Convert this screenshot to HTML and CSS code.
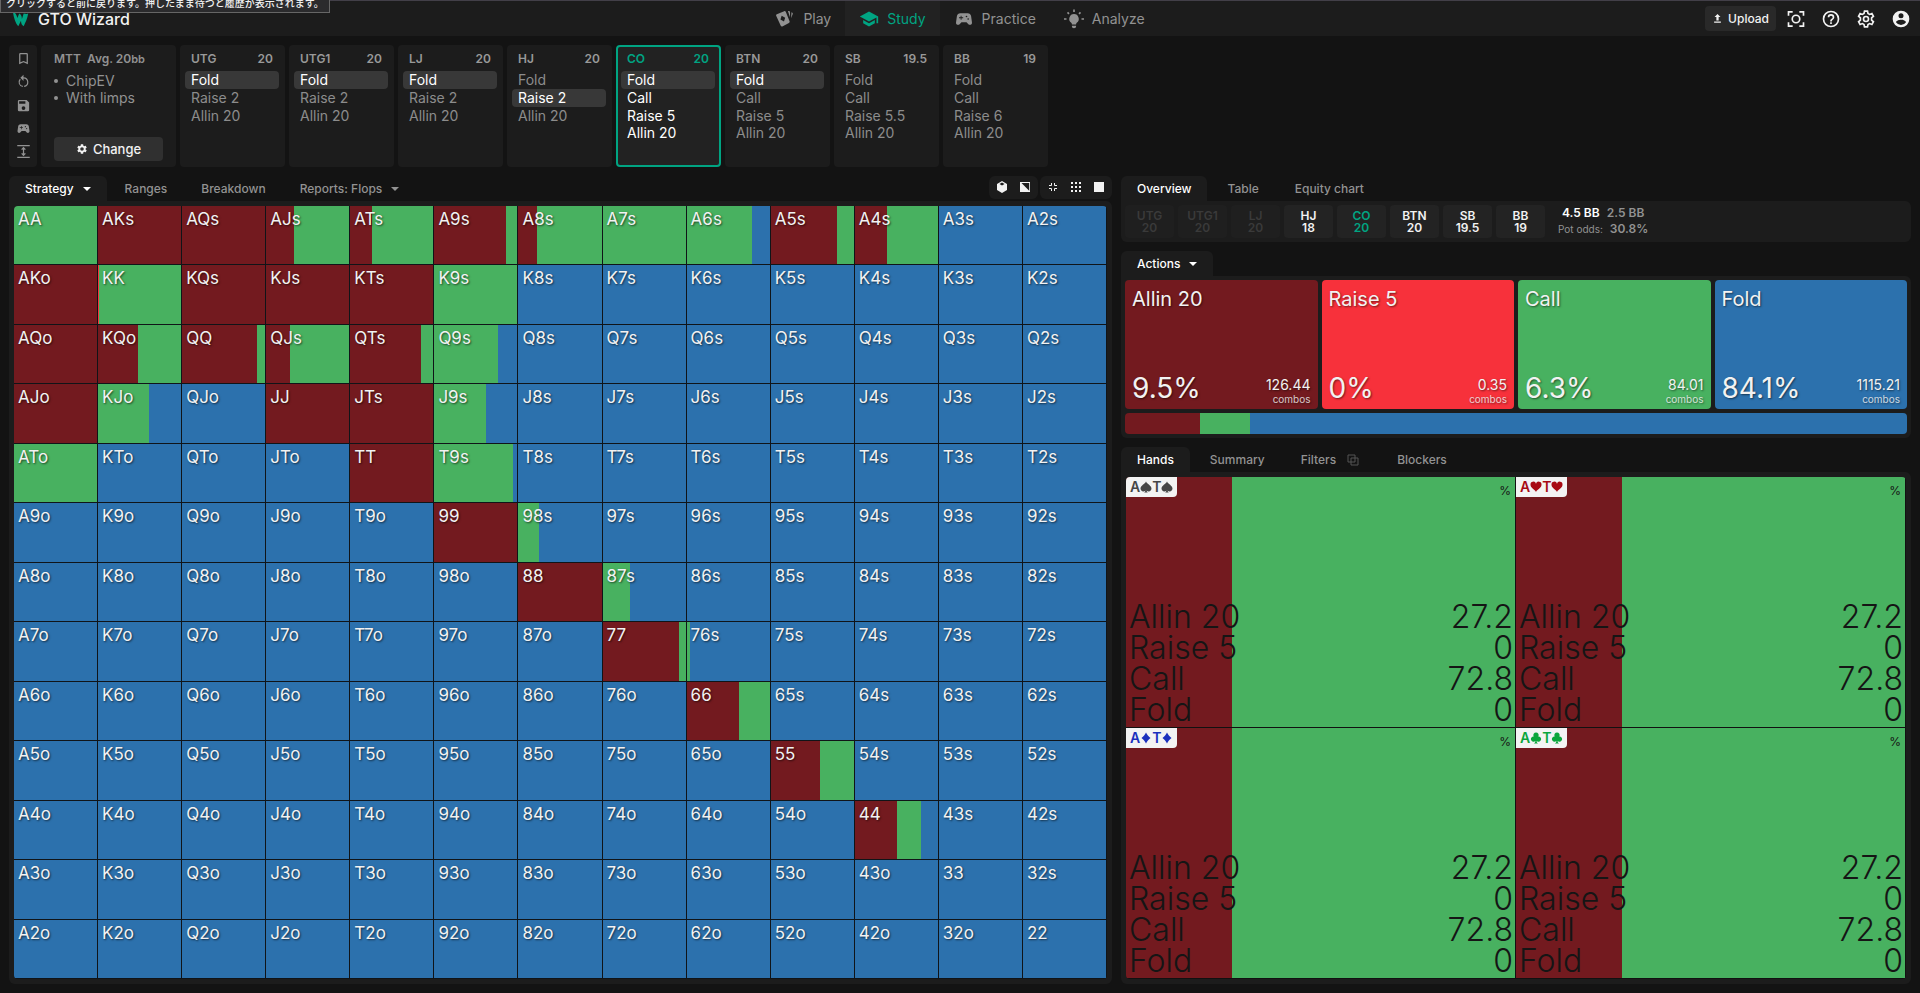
FILE: index.html
```html
<!DOCTYPE html>
<html lang="en">
<head>
<meta charset="utf-8">
<title>GTO Wizard</title>
<link rel="stylesheet" href="styles.css">
</head>
<body>
<svg class="sprite" aria-hidden="true">
  <symbol id="i-pad" viewBox="0 0 24 24"><path d="M21.58 16.09l-1.09-7.66C20.21 6.46 18.52 5 16.53 5H7.47C5.48 5 3.79 6.46 3.51 8.43l-1.09 7.66C2.2 17.63 3.39 19 4.94 19c.68 0 1.32-.27 1.8-.75L9 16h6l2.25 2.25c.48.48 1.13.75 1.8.75 1.56 0 2.75-1.37 2.53-2.91zM11 11H9v2H8v-2H6v-1h2V8h1v2h2v1zm4-1a1 1 0 1 1 0-2 1 1 0 0 1 0 2zm2 3a1 1 0 1 1 0-2 1 1 0 0 1 0 2z"/></symbol>
  <symbol id="i-gear" viewBox="0 0 24 24"><path d="M19.14 12.94c.04-.3.06-.61.06-.94 0-.32-.02-.64-.07-.94l2.03-1.58c.18-.14.23-.41.12-.61l-1.92-3.32c-.12-.22-.37-.29-.59-.22l-2.39.96c-.5-.38-1.03-.7-1.62-.94l-.36-2.54c-.04-.24-.24-.41-.48-.41h-3.84c-.24 0-.43.17-.47.41l-.36 2.54c-.59.24-1.13.57-1.62.94l-2.39-.96c-.22-.08-.47 0-.59.22L2.74 8.87c-.12.21-.08.47.12.61l2.03 1.58c-.05.3-.09.63-.09.94s.02.64.07.94l-2.03 1.58c-.18.14-.23.41-.12.61l1.92 3.32c.12.22.37.29.59.22l2.39-.96c.5.38 1.03.7 1.62.94l.36 2.54c.05.24.24.41.48.41h3.84c.24 0 .44-.17.47-.41l.36-2.54c.59-.24 1.13-.56 1.62-.94l2.39.96c.22.08.47 0 .59-.22l1.92-3.32c.12-.22.07-.47-.12-.61l-2.01-1.58zM12 15.6A3.6 3.6 0 1 1 12 8.4a3.6 3.6 0 0 1 0 7.2z"/></symbol>
  <symbol id="i-spade" viewBox="0 0 24 24"><path d="M12 1C10 6 1 9 1 15.500a5.500 5.500 0 0 0 9.700 3.300C10.500 20.800 9.500 22 8 23h8c-1.500-1-2.500-2.200-2.700-4.200A5.500 5.500 0 0 0 23 15.500C23 9 14 6 12 1z"/></symbol>
  <symbol id="i-heart" viewBox="0 0 24 24"><path d="M12 22C10 17 1 14 1 7.500A5.600 5.600 0 0 1 12 5.500a5.600 5.600 0 0 1 11 2C23 14 14 17 12 22z"/></symbol>
  <symbol id="i-diamond" viewBox="0 0 24 24"><path d="M12 1c2 4 5 8 9 11-4 3-7 7-9 11-2-4-5-8-9-11 4-3 7-7 9-11z"/></symbol>
  <symbol id="i-club" viewBox="0 0 24 24"><path d="M12 1a5.200 5.200 0 0 0-4.500 7.900A5.300 5.300 0 1 0 10.800 18c-.1 2.400-1.100 4-2.800 5h8c-1.700-1-2.700-2.600-2.800-5a5.300 5.300 0 1 0 3.300-9.100A5.200 5.200 0 0 0 12 1z"/></symbol>
</svg>

<div class="hint" role="tooltip">クリックすると前に戻ります。押したまま待つと履歴が表示されます。</div>

<header class="topbar">
  <a class="brand" href="#">
    <svg class="brand-mark" viewBox="0 0 20 16"><path d="M1 0c3 1 4 3 5 7l2-5c2 1 3 3 3 6l2-6c2 0 3 1 5 0-1 6-3 10-5 14-2-1-3-3-3-6l-3 6C4 13 2 7 1 0z"/></svg>
    <span>GTO Wizard</span>
  </a>
  <nav class="nav">
    <a class="nav-item" href="#">
      <svg class="i20" viewBox="0 0 24 24"><path fill-rule="evenodd" d="M2.200 6.200 11 2.600c.8-.3 1.500 0 1.900.8l4.600 11.400c.3.800 0 1.500-.8 1.900L8.800 21c-.8.300-1.500 0-1.900-.8L1.400 8.200c-.3-.9 0-1.600.8-2zM8 8l-1.500 4.500L10.800 15l1.400-4.600z"/><path d="M15.500 2.500h1c.8 0 1.500.6 1.500 1.400v6zM19.800 3.800c1 .3 1.900 1 1.500 2.200l-2 5z"/></svg>
      <span>Play</span></a>
    <a class="nav-item active" href="#">
      <svg class="i20" viewBox="0 0 24 24"><path d="M5 13.180v4L12 21l7-3.820v-4L12 17zM12 3 1 9l11 6 9-4.910V17h2V9z"/></svg>
      <span>Study</span></a>
    <a class="nav-item" href="#"><svg class="i20"><use href="#i-pad"/></svg><span>Practice</span></a>
    <a class="nav-item" href="#">
      <svg class="i20" viewBox="0 0 24 24"><path d="M12 6a5.800 5.800 0 0 0-3.300 10.500c.6.500.8 1.200.8 2h5c0-.8.200-1.500.8-2A5.800 5.800 0 0 0 12 6zM9.500 20h5v1c0 1-.9 2-2.500 2s-2.500-1-2.500-2z"/><path class="line" d="M12 .5V3.500M4.200 4 6 5.800M19.800 4 18 5.800M0 12h3M21 12h3"/></svg>
      <span>Analyze</span></a>
  </nav>
  <div class="tools">
    <button class="upload"><svg viewBox="0 0 12 12"><path d="M6 0l4 4H7.500v4.500h-3V4H2zM1.500 10h9v1.500h-9z"/></svg>Upload</button>
    <button class="tool" aria-label="Capture"><svg class="i20" viewBox="0 0 24 24"><path class="line" d="M3 8V3.500h5M16 3.500h5V8M21 16v4.500h-5M8 20.500H3V16"/><circle class="line" cx="12" cy="12" r="4.500"/></svg></button>
    <button class="tool" aria-label="Help"><svg class="i20" viewBox="0 0 24 24"><path d="M11 18h2v-2h-2v2zm1-16a10 10 0 1 0 0 20 10 10 0 0 0 0-20zm0 18a8 8 0 1 1 0-16 8 8 0 0 1 0 16zm0-14a4 4 0 0 0-4 4h2a2 2 0 1 1 4 0c0 2-3 1.750-3 5h2c0-2.250 3-2.500 3-5a4 4 0 0 0-4-4z"/></svg></button>
    <button class="tool" aria-label="Settings"><svg class="i20" viewBox="0 0 24 24"><path class="line" d="M10.200 2.500h3.600l.6 2.900 1.900 1.100 2.800-1 1.800 3.200-2.200 1.900v2.800l2.200 1.900-1.800 3.200-2.800-1-1.900 1.100-.6 2.900h-3.600l-.6-2.900-1.900-1.100-2.800 1-1.800-3.200 2.200-1.900v-2.800L3.100 8.700l1.800-3.200 2.800 1 1.900-1.100z"/><circle class="line" cx="12" cy="12" r="3"/></svg></button>
    <button class="tool" aria-label="Account"><svg class="i20" viewBox="0 0 24 24"><path d="M12 2a10 10 0 1 0 0 20 10 10 0 0 0 0-20zm0 3a3 3 0 1 1 0 6 3 3 0 0 1 0-6zm0 14.200a7.200 7.200 0 0 1-6-3.220c.03-1.990 4-3.080 6-3.080 1.990 0 5.970 1.090 6 3.080a7.200 7.200 0 0 1-6 3.220z"/></svg></button>
  </div>
</header>

<section class="spots">
  <div class="side">
    <button aria-label="Bookmark"><svg viewBox="0 0 24 24"><path d="M17 18l-5-2.180L7 18V5h10m0-2H7a2 2 0 0 0-2 2v16l7-3 7 3V5a2 2 0 0 0-2-2z"/></svg></button>
    <button aria-label="Reset"><svg viewBox="0 0 24 24"><path d="M12 5V1L7 6l5 5V7a6 6 0 0 1 1 11.900v2A8 8 0 0 0 12 5zM6 13a6 6 0 0 1 1.500-4L6.100 7.600A8 8 0 0 0 11 20.900v-2A6 6 0 0 1 6 13z"/></svg></button>
    <button aria-label="Save"><svg viewBox="0 0 24 24"><path d="M15 9H5V5h10m-3 14a3 3 0 1 1 0-6 3 3 0 0 1 0 6m5-16H5a2 2 0 0 0-2 2v14a2 2 0 0 0 2 2h14a2 2 0 0 0 2-2V7z"/></svg></button>
    <button aria-label="Practice"><svg><use href="#i-pad"/></svg></button>
    <button aria-label="Row height"><svg viewBox="0 0 24 24"><path class="line" d="M2 2.500h20M2 21.500h20M12 6v12M9 9l3-3 3 3M9 15l3 3 3-3"/></svg></button>
  </div>
  <div class="game">
    <h2>MTT&nbsp; Avg. 20<small>bb</small></h2>
    <ul><li>ChipEV</li><li>With limps</li></ul>
    <button class="change"><svg><use href="#i-gear"/></svg>Change</button>
  </div>
  <div class="spot"><h3>UTG<span>20</span></h3><button class="on">Fold</button><button>Raise 2</button><button>Allin 20</button></div>
  <div class="spot"><h3>UTG1<span>20</span></h3><button class="on">Fold</button><button>Raise 2</button><button>Allin 20</button></div>
  <div class="spot"><h3>LJ<span>20</span></h3><button class="on">Fold</button><button>Raise 2</button><button>Allin 20</button></div>
  <div class="spot"><h3>HJ<span>20</span></h3><button>Fold</button><button class="on">Raise 2</button><button>Allin 20</button></div>
  <div class="spot current"><h3>CO<span>20</span></h3><button class="on">Fold</button><button>Call</button><button>Raise 5</button><button>Allin 20</button></div>
  <div class="spot"><h3>BTN<span>20</span></h3><button class="on">Fold</button><button>Call</button><button>Raise 5</button><button>Allin 20</button></div>
  <div class="spot"><h3>SB<span>19.5</span></h3><button>Fold</button><button>Call</button><button>Raise 5.5</button><button>Allin 20</button></div>
  <div class="spot"><h3>BB<span>19</span></h3><button>Fold</button><button>Call</button><button>Raise 6</button><button>Allin 20</button></div>
</section>

<main class="main">
  <section class="left">
    <div class="tabs wide">
      <button class="tab active">Strategy<i class="caret"></i></button>
      <button class="tab">Ranges</button>
      <button class="tab">Breakdown</button>
      <button class="tab">Reports: Flops<i class="caret"></i></button>
      <div class="views">
        <div class="view-group">
          <button aria-label="3D"><svg viewBox="0 0 12 12"><path fill-rule="evenodd" d="M6 0l5 3v6l-5 3-5-3V3zM6 1.500 3.500 3 6 4.500 8.500 3z"/></svg></button>
          <button aria-label="Contrast"><svg viewBox="0 0 12 12"><path fill-rule="evenodd" d="M1 1h10v10H1zM2.500 2l7.700 7.700V2z"/></svg></button>
        </div>
        <div class="view-group">
          <button aria-label="Compact"><svg viewBox="0 0 12 12"><path class="thin" d="M2 4.500h2.500V2M7.500 2v2.500H10M10 7.500H7.500V10M4.500 10V7.500H2"/></svg></button>
          <button aria-label="Dots"><svg viewBox="0 0 12 12"><path d="M1 1h2v2H1zM5 1h2v2H5zM9 1h2v2H9zM1 5h2v2H1zM5 5h2v2H5zM9 5h2v2H9zM1 9h2v2H1zM5 9h2v2H5zM9 9h2v2H9z"/></svg></button>
          <button aria-label="Full"><svg viewBox="0 0 12 12"><path d="M1 1h10v10H1z"/></svg></button>
        </div>
      </div>
    </div>
    <div class="panel grow"><div class="matrix" id="matrix"></div></div>
  </section>

  <section class="right">
    <div class="tabs">
      <button class="tab active">Overview</button>
      <button class="tab">Table</button>
      <button class="tab">Equity chart</button>
    </div>
    <div class="panel seats">
      <div class="seat out">UTG<span>20</span></div>
      <div class="seat out">UTG1<span>20</span></div>
      <div class="seat out">LJ<span>20</span></div>
      <div class="seat">HJ<span>18</span></div>
      <div class="seat hero">CO<span>20</span></div>
      <div class="seat">BTN<span>20</span></div>
      <div class="seat">SB<span>19.5</span></div>
      <div class="seat">BB<span>19</span></div>
      <div class="pot">
        <div><b>4.5 BB</b><span>2.5 BB</span></div>
        <div><small>Pot odds:</small><span>30.8%</span></div>
      </div>
    </div>

    <div class="tabs spaced"><button class="tab active">Actions<i class="caret"></i></button></div>
    <div class="panel">
      <div class="actions">
        <button class="action allin"><span class="name">Allin 20</span><span class="pct">9.5%</span><span class="combos">126.44<small>combos</small></span></button>
        <button class="action raise"><span class="name">Raise 5</span><span class="pct">0%</span><span class="combos">0.35<small>combos</small></span></button>
        <button class="action call"><span class="name">Call</span><span class="pct">6.3%</span><span class="combos">84.01<small>combos</small></span></button>
        <button class="action fold"><span class="name">Fold</span><span class="pct">84.1%</span><span class="combos">1115.21<small>combos</small></span></button>
      </div>
      <div class="mix"><div class="allin" style="width:9.6%"></div><div class="call" style="width:6.4%"></div><div class="fold rest"></div></div>
    </div>

    <div class="tabs spaced">
      <button class="tab active">Hands</button>
      <button class="tab">Summary</button>
      <button class="tab filters">Filters<svg class="copy" viewBox="0 0 12 12"><path class="thin" d="M1 1h7v7H1zM4 4h7v7H4z"/></svg></button>
      <button class="tab">Blockers</button>
    </div>
    <div class="panel grow"><div class="combos-grid" id="combos"></div></div>
  </section>
</main>
<script src="app.js"></script>
</body>
</html>
```
FILE: styles.css
```css
:root {
  --bg: #131313;
  --panel: #1c1c1c;
  --muted: #929292;
  --accent: #00a482;
  --allin: #731a1f;
  --raise: #f7313b;
  --call: #48b160;
  --fold: #2c71ad;
}
* { box-sizing: border-box; }
body {
  margin: 0;
  min-height: 100vh;
  display: flex;
  flex-direction: column;
  background: var(--bg);
  color: #f2f2f2;
  font: 14px/18px Inter, "Noto Sans CJK JP", sans-serif;
}
button { font: inherit; color: inherit; background: none; border: 0; padding: 0; text-align: left; cursor: pointer; }
a { color: inherit; text-decoration: none; }
h2, h3, ul { margin: 0; padding: 0; font-size: 12px; font-weight: 600; }
svg { fill: currentColor; display: block; flex: none; }
.sprite { position: absolute; width: 0; height: 0; }
.line { fill: none; stroke: currentColor; stroke-width: 2; }
.thin { fill: none; stroke: currentColor; stroke-width: 1; }
.i20 { width: 20px; height: 20px; }

.hint {
  position: absolute;
  top: -8px;
  left: 0;
  z-index: 2;
  padding: 0 5px;
  background: #2b2b2d;
  border: 1px solid #666;
  font: 500 10px/19px "Noto Sans CJK JP", sans-serif;
  white-space: nowrap;
}

/* Header */
.topbar {
  display: grid;
  grid-template-columns: 1fr auto 1fr;
  height: 36px;
  background: var(--panel);
  border-top: 1px solid #423f48;
}
.brand { display: flex; align-items: center; gap: 8px; padding-left: 12px; font-size: 16px; font-weight: 500; }
.brand-mark { width: 18px; height: 16px; fill: var(--accent); }
.nav { display: flex; }
.nav-item { display: flex; align-items: center; gap: 8px; padding: 1px 14px 0; color: var(--muted); }
.nav-item.active { color: var(--accent); background: #222; }
.tools { display: flex; justify-content: flex-end; align-items: center; gap: 10px; padding-right: 9px; }
.tool + .tool { margin-left: 5px; }
.upload {
  display: flex; align-items: center; gap: 6px;
  height: 25px; padding: 0 7px 0 8px;
  background: #292929; border-radius: 4px;
  font-size: 12px; font-weight: 500;
}
.upload svg { width: 9px; height: 9px; }

/* Decision points */
.spots { display: flex; gap: 4px; padding: 9px 9px 0; }
.side, .game, .spot { background: var(--panel); border-radius: 4px; height: 122px; }
.side { width: 28px; padding: 6px 0 8px; display: flex; flex-direction: column; justify-content: space-between; align-items: center; color: var(--muted); }
.side svg { width: 15px; height: 15px; }
.game { width: 135px; padding: 5px 13px 6px; display: flex; flex-direction: column; color: var(--muted); }
.game h2 { line-height: 18px; }
.game h2 small { font-size: 11px; }
.game ul { padding-top: 4px; font-size: 14px; line-height: 17px; font-weight: 400; list-style: none; }
.game li { display: flex; align-items: center; gap: 8px; }
.game li::before { content: ""; width: 4px; height: 4px; border-radius: 50%; background: currentColor; }
.change {
  display: flex; align-items: center; justify-content: center; gap: 5px;
  margin-top: auto; height: 24px;
  background: #303030; border-radius: 4px; color: #f2f2f2; font-weight: 500; font-size: 13px;
}
.change svg { width: 12px; height: 12px; }
.spot { width: 105px; padding: 3px 4px 3px 3px; border: 2px solid transparent; background-clip: border-box; color: #8c8c8c; }
.spot h3 { display: flex; justify-content: space-between; padding: 0 6px 3px; line-height: 18px; color: #999; }
.spot button { display: block; width: 100%; height: 18px; padding: 0 6px; border-radius: 4px; line-height: 18px; }
.spot button:nth-of-type(3) { height: 17px; line-height: 17px; }
.spot button.on { background: #383838; color: #fff; }
.spot.current { background: #222; border-color: var(--accent); color: #fff; }
.spot.current h3 { color: var(--accent); }

/* Main columns */
.main { flex: 1; display: grid; grid-template-columns: 1103fr 790fr; gap: 9px; padding: 9px; }
.left, .right { display: flex; flex-direction: column; min-width: 0; }
.tabs { display: flex; height: 25px; }
.tabs.spaced { margin-top: 9px; }
.tab { display: flex; align-items: center; gap: 9px; padding: 0 18px; color: var(--muted); font-size: 12px; font-weight: 500; border-radius: 6px 6px 0 0; }
.right .tab { padding: 0 16px; }
.right .tab + .tab { padding-left: 20px; }
.tab.active { background: var(--panel); color: #fff; }
.tab.filters { gap: 11px; padding-right: 18px; }
.wide .tab { padding: 0 17px; }
.wide .tab.active { padding: 0 16px; margin-right: 1px; }
.caret { border: 4px solid transparent; border-top-color: currentColor; border-bottom: 0; }
.copy { width: 12px; height: 12px; color: #555; }
.views { display: flex; gap: 2px; margin-left: auto; padding-bottom: 2px; }
.view-group { display: flex; align-items: center; gap: 11px; padding: 0 7px 2px; border-radius: 6px; background: var(--panel); }
.view-group svg { width: 12px; height: 12px; }
.panel { background: var(--panel); border-radius: 0 6px 6px 6px; padding: 4px; }
.grow { flex: 1; display: flex; padding: 5px; }

.matrix {
  flex: 1;
  display: grid;
  grid-template: repeat(13, 1fr) / repeat(13, 1fr);
  gap: 1px;
  padding: 0 1px 1px 0;
  background: #101418;
  border-radius: 4px;
  overflow: hidden;
}
.cell { display: flex; align-items: flex-start; padding: 3px 4px; font-size: 17px; line-height: 20px; text-shadow: 1px 1px 2px #0009; }

/* Overview */
.seats { display: flex; gap: 4px; }
.seat { width: 49px; height: 33px; padding: 5px 0 4px; background: #232323; border-radius: 4px; text-align: center; font-size: 12px; line-height: 12px; font-weight: 600; }
.seat span { display: block; }
.seat.out { color: #3a3a3a; background: #1f1f1f; }
.seat.hero { color: var(--accent); }
.pot { padding-left: 9px; font-size: 12px; line-height: 16px; font-weight: 600; color: var(--muted); }
.pot div { display: flex; justify-content: center; gap: 7px; }
.pot b { color: #fff; font-weight: 600; }
.pot small { font-size: 10px; font-weight: 400; }

/* Actions */
.allin { background: var(--allin); }
.raise { background: var(--raise); }
.call { background: var(--call); }
.fold { background: var(--fold); }
.actions { display: grid; grid-template-columns: repeat(4, 1fr); gap: 4px; }
.action {
  display: grid; grid-template: 1fr auto / 1fr auto; align-items: end;
  height: 129px; padding: 7px 7px 4px; border-radius: 4px;
  text-shadow: 1px 1px 2px #0008;
}
.action .name { grid-column: 1 / 3; align-self: start; font-size: 20px; line-height: 24px; }
.action .pct { font-size: 28px; line-height: 34px; }
.action .combos { text-align: right; line-height: 16px; }
.action small { display: block; font-size: 10px; line-height: 12px; opacity: .8; }
.mix { display: flex; height: 21px; margin-top: 4px; border-radius: 4px; overflow: hidden; }
.rest { flex: 1; }

/* Combos */
.combos-grid { flex: 1; display: grid; grid-template: 1fr 1fr / 1fr 1fr; gap: 1px; padding: 0 1px 1px 0; background: #111; border-radius: 4px; overflow: hidden; }
.combo { display: flex; flex-direction: column; justify-content: space-between; color: #151515; }
.combo-top { display: flex; justify-content: space-between; font-size: 12px; }
.combo-top > span:last-child { padding: 5px 4px 0 0; }
.badge { display: flex; align-items: center; height: 20px; padding: 0 4px; background: #f3f3f3; border-radius: 0 0 4px 0; font-size: 14px; font-weight: 600; }
.badge svg { width: 12px; height: 12px; }
.spade { color: #464646; }
.heart { color: #a80a14; }
.diamond { color: #1b30bd; }
.club { color: #0ba63c; }
.freqs { margin: 0; padding: 0 2px 2px 3px; font-size: 32px; line-height: 31px; font-weight: 300; }
.freqs div { display: flex; justify-content: space-between; }
.freqs dd { margin: 0; }
```
FILE: app.js
```js
const ranks = 'AKQJT98765432';

// [all-in %, raise %, call %]; the remainder is fold
const mix = {
  AA: [0, 0, 100], AKs: [100], AQs: [100], AJs: [34, 0, 66], ATs: [27, 0, 73], A9s: [87, 0, 13],
  A8s: [23, 0, 77], A7s: [0, 0, 100], A6s: [0, 0, 78], A5s: [79, 0, 21], A4s: [38, 0, 62],
  AKo: [100], KK: [0, 1.3, 98.7], KQs: [100], KJs: [100], KTs: [100], K9s: [0, 0, 100],
  AQo: [100], KQo: [48, 0, 52], QQ: [90, 0, 10], QJs: [29, 0, 71], QTs: [86, 0, 14], Q9s: [0, 0, 77],
  AJo: [100], KJo: [0, 0, 61], JJ: [100], JTs: [100], J9s: [0, 0, 63],
  ATo: [0, 0, 100], TT: [100], T9s: [0, 0, 95], 99: [100], '98s': [0, 0, 25], 88: [100], '87s': [0, 0, 33],
  77: [91, 0, 9], '76s': [0, 0, 4], 66: [63, 0, 37], 55: [59, 0, 41], 44: [51, 0, 28]
};

function paint([allin = 0, raise = 0, call = 0]) {
  const r = allin + raise, c = r + call;
  return `linear-gradient(90deg, var(--allin) ${allin}%, var(--raise) ${allin}% ${r}%, var(--call) ${r}% ${c}%, var(--fold) ${c}%)`;
}

const matrix = document.getElementById('matrix');
for (let row = 0; row < 13; row++) {
  for (let col = 0; col < 13; col++) {
    const hand = row === col ? ranks[row] + ranks[row]
      : col > row ? ranks[row] + ranks[col] + 's' : ranks[col] + ranks[row] + 'o';
    const cell = document.createElement('button');
    cell.className = 'cell';
    cell.textContent = hand;
    cell.style.background = paint(mix[hand] || []);
    matrix.append(cell);
  }
}

const freqs = [['Allin 20', '27.2'], ['Raise 5', '0'], ['Call', '72.8'], ['Fold', '0']];
const combos = document.getElementById('combos');
for (const suit of ['spade', 'heart', 'diamond', 'club']) {
  const icon = `<svg><use href="#i-${suit}"/></svg>`;
  const tile = document.createElement('div');
  tile.className = 'combo';
  tile.style.background = paint([27.2, 0, 72.8]);
  tile.innerHTML = `<div class="combo-top"><span class="badge ${suit}">A${icon}T${icon}</span><span>%</span></div>
    <dl class="freqs">${freqs.map(([n, v]) => `<div><dt>${n}</dt><dd>${v}</dd></div>`).join('')}</dl>`;
  combos.append(tile);
}
```
